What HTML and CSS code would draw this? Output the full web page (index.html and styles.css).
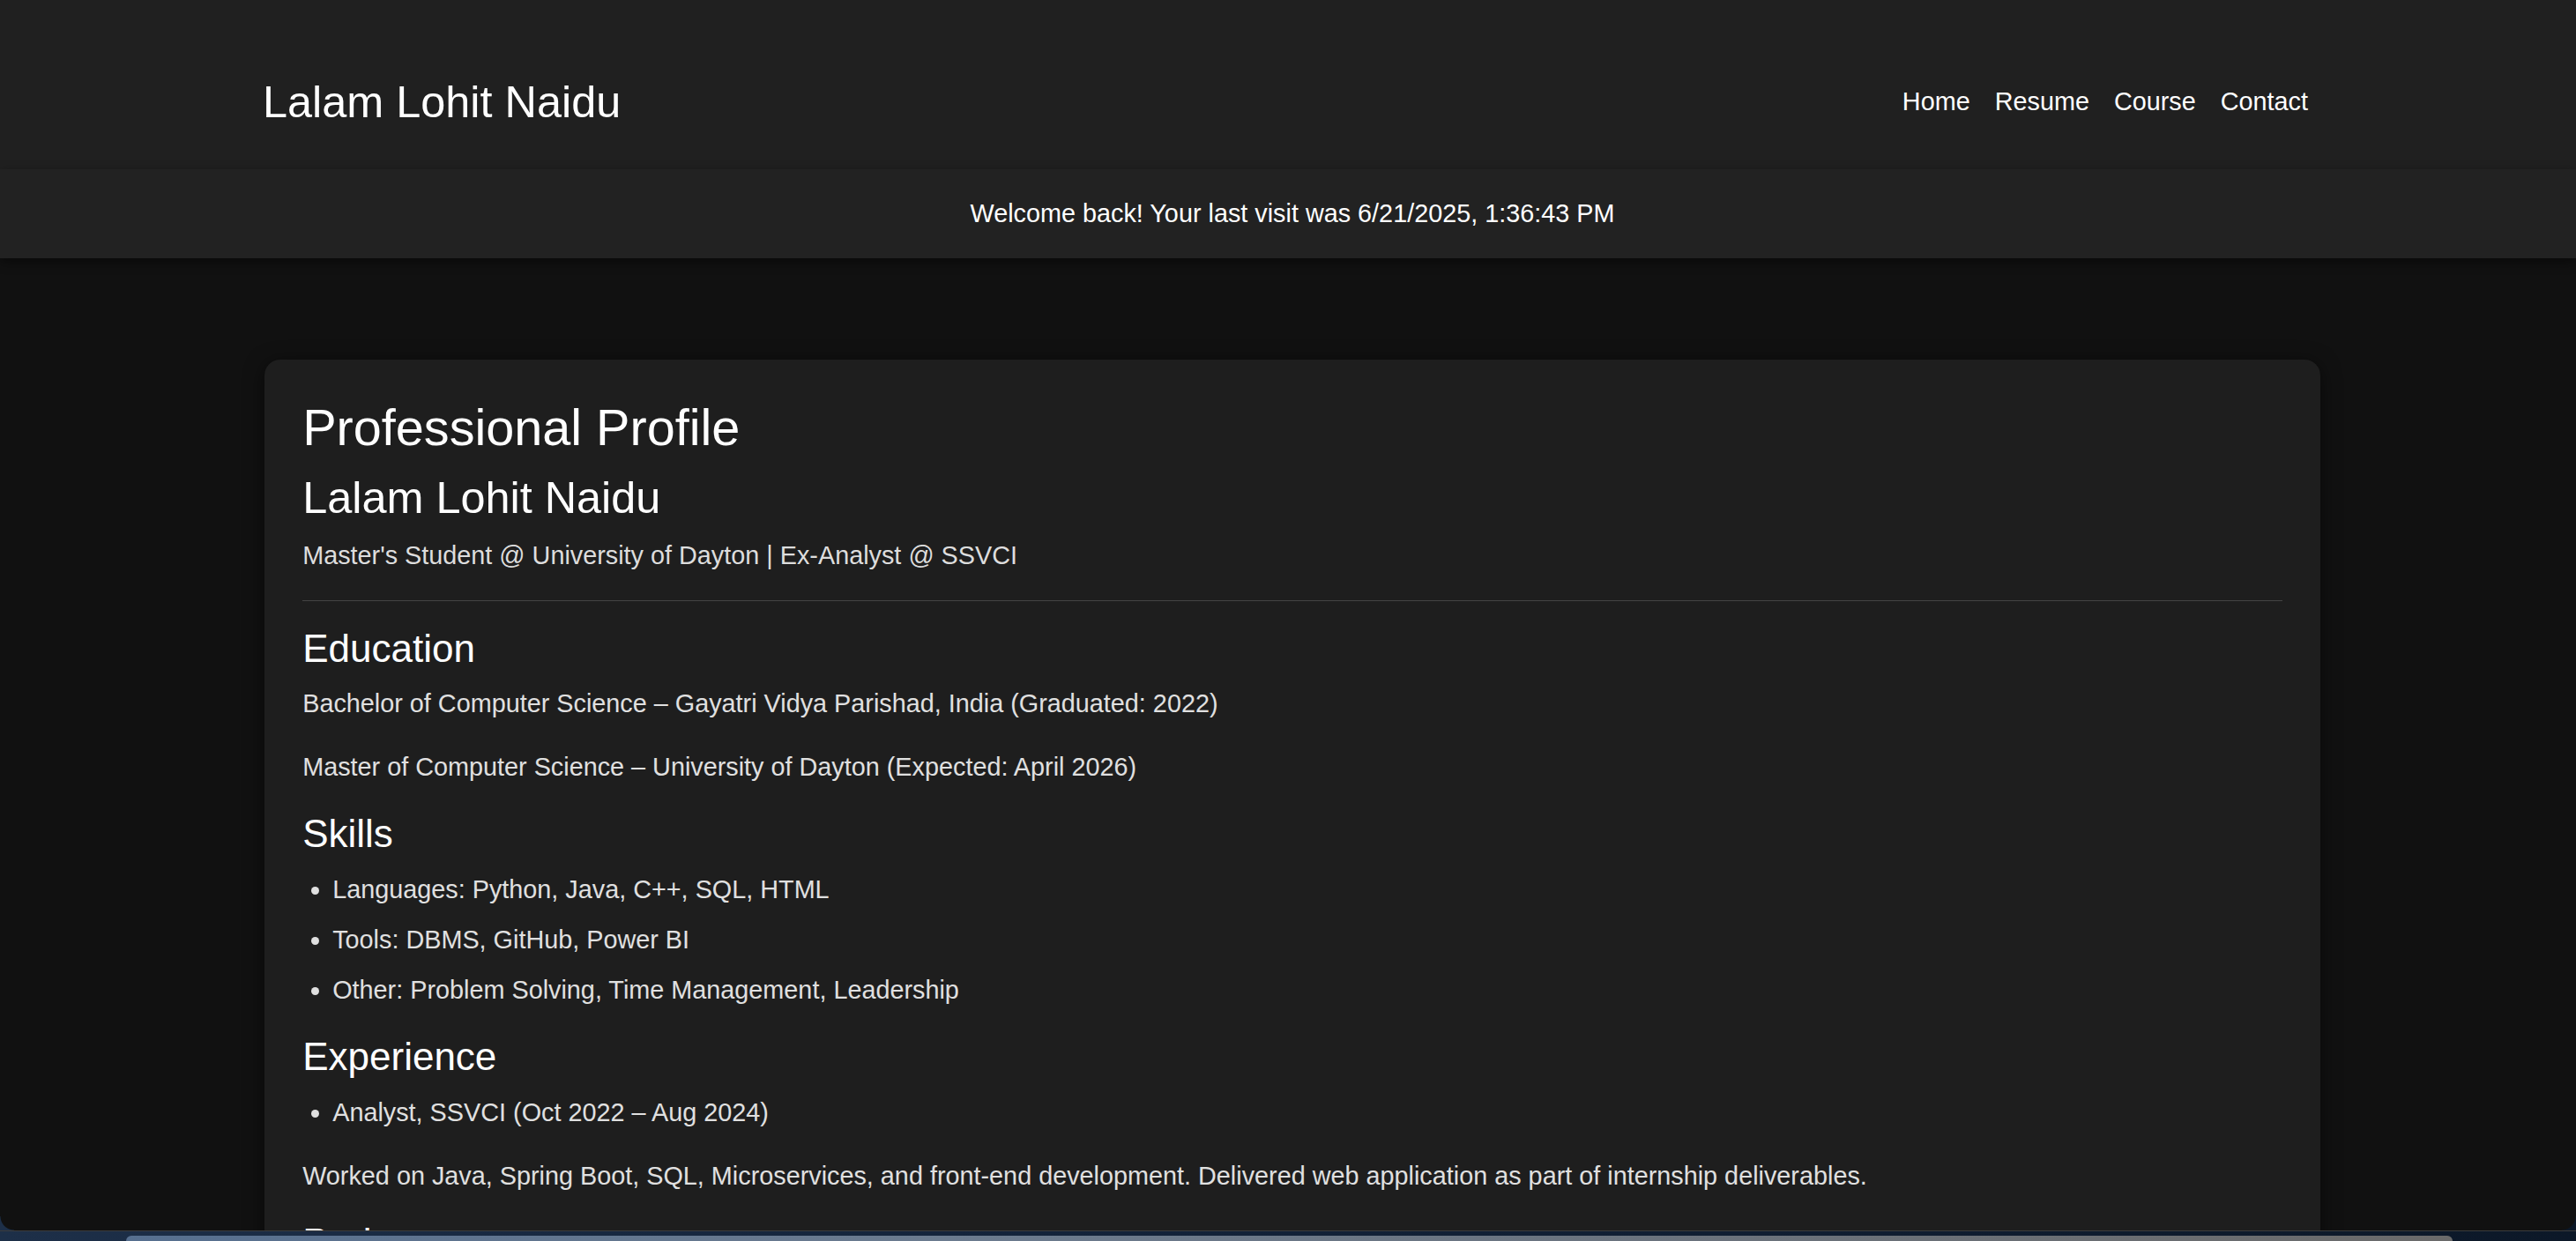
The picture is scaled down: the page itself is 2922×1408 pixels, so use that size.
FILE: index.html
```html
<!DOCTYPE html>
<html lang="en">
<head>
<meta charset="utf-8">
<title>Lalam Lohit Naidu</title>
<link rel="stylesheet" href="styles.css">
</head>
<body>
<header class="site-header">
  <div class="wrap header-inner">
    <div class="brand">Lalam Lohit Naidu</div>
    <nav class="nav">
      <a href="#">Home</a>
      <a href="#">Resume</a>
      <a href="#">Course</a>
      <a href="#">Contact</a>
    </nav>
  </div>
</header>
<div class="welcome">
  <div class="wrap">Welcome back! Your last visit was 6/21/2025, 1:36:43 PM</div>
</div>
<main class="wrap card">
  <h1>Professional Profile</h1>
  <h2>Lalam Lohit Naidu</h2>
  <p class="tagline">Master's Student @ University of Dayton | Ex-Analyst @ SSVCI</p>
  <hr>
  <h3>Education</h3>
  <p>Bachelor of Computer Science – Gayatri Vidya Parishad, India (Graduated: 2022)</p>
  <p>Master of Computer Science – University of Dayton (Expected: April 2026)</p>
  <h3>Skills</h3>
  <ul>
    <li>Languages: Python, Java, C++, SQL, HTML</li>
    <li>Tools: DBMS, GitHub, Power BI</li>
    <li>Other: Problem Solving, Time Management, Leadership</li>
  </ul>
  <h3>Experience</h3>
  <ul>
    <li>Analyst, SSVCI (Oct 2022 – Aug 2024)</li>
  </ul>
  <p>Worked on Java, Spring Boot, SQL, Microservices, and front-end development. Delivered web application as part of internship deliverables.</p>
  <h3>Projects</h3>
  <p>Portfolio website built with HTML, CSS and JavaScript.</p>
</main>
<div class="desk">
  <div class="other-win"></div>
</div>
</body>
</html>
```
FILE: styles.css
```css
html, body {
  margin: 0;
  padding: 0;
}
body {
  background: #111111;
  font-family: "Liberation Sans", Helvetica, Arial, sans-serif;
  font-size: 28.8px;
  line-height: 1.5;
  color: #e0e0e0;
  height: 1408px;
  overflow: hidden;
}
.wrap {
  width: 2332px;
  margin-left: 300px;
  box-sizing: border-box;
}
.site-header {
  background: #202020;
  height: 192px;
  box-sizing: border-box;
  padding-top: 40px;
  display: flex;
}
.header-inner {
  display: flex;
  align-items: center;
  justify-content: space-between;
}
.brand {
  font-size: 50.4px;
  line-height: 1.2;
  color: #ffffff;
  margin-left: -2px;
}
.nav {
  display: flex;
}
.nav a {
  color: #ffffff;
  text-decoration: none;
  padding: 0 14px;
  font-size: 28.8px;
  line-height: 1.5;
}
.welcome {
  position: relative;
  background: #222222;
  padding: 28.9px 0;
  text-align: center;
  color: #ffffff;
  box-shadow: 0 4px 12px rgba(0, 0, 0, 0.45);
}
.card {
  margin-top: 115px;
  background: #1e1e1e;
  border-radius: 18px;
  padding: 43.2px;
  box-shadow: 0 4px 22px rgba(0, 0, 0, 0.55);
}
.card h1 {
  font-size: 57.6px;
  line-height: 1.2;
  font-weight: normal;
  color: #ffffff;
  margin: 0 0 15px;
}
.card h2 {
  font-size: 50.4px;
  line-height: 1.2;
  font-weight: normal;
  color: #ffffff;
  margin: 0;
}
.card h3 {
  font-size: 44px;
  line-height: 1.15;
  font-weight: normal;
  color: #ffffff;
  margin: 28.8px 0 16px;
}
.card p {
  margin: 0 0 28.8px;
}
.card .tagline {
  margin-top: 13.3px;
  color: #dddddd;
}
.card hr {
  border: 0;
  border-top: 1px solid #444444;
  margin: 28.8px 0;
}
.card ul {
  margin: 0 0 28.8px;
  padding-left: 34px;
}
.card li {
  margin-bottom: 14px;
}
.desk {
  position: fixed;
  left: 0;
  right: 0;
  bottom: 0;
  height: 11px;
  background: linear-gradient(90deg, #1d2f48 0%, #13233a 40%, #0c1828 100%);
  border-top: 1px solid #3c3c3c;
}
.desk::before,
.desk::after {
  content: "";
  position: absolute;
  bottom: 100%;
  width: 16px;
  height: 16px;
  margin-bottom: 1px;
}
.desk::before {
  left: 0;
  background: radial-gradient(circle at 100% 0, transparent 15px, #1d2f48 16px);
}
.desk::after {
  right: 0;
  background: radial-gradient(circle at 0 0, transparent 15px, #0c1828 16px);
}
.other-win {
  position: absolute;
  left: 143px;
  right: 140px;
  top: 5px;
  bottom: 0;
  border-radius: 14px 14px 0 0;
  background: linear-gradient(90deg, #566f8f 0%, #6b7b8f 35%, #6a6a6a 100%);
}
```
